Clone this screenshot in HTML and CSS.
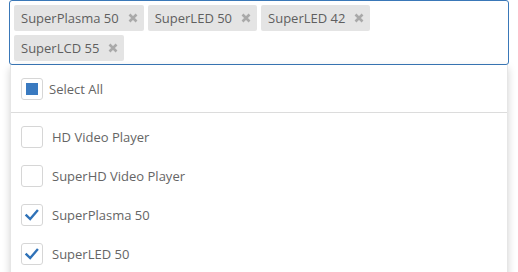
FILE: index.html
```html
<!DOCTYPE html>
<html>
<head>
<meta charset="utf-8">
<link rel="stylesheet" href="styles.css">
</head>
<body>
<div class="wrap">
  <div class="ms">
    <span class="tag">SuperPlasma 50<svg class="x" viewBox="0 0 10 10"><path d="M1.5 1.5L8.5 8.5M8.5 1.5L1.5 8.5"/></svg></span>
    <span class="tag">SuperLED 50<svg class="x" viewBox="0 0 10 10"><path d="M1.5 1.5L8.5 8.5M8.5 1.5L1.5 8.5"/></svg></span>
    <span class="tag">SuperLED 42<svg class="x" viewBox="0 0 10 10"><path d="M1.5 1.5L8.5 8.5M8.5 1.5L1.5 8.5"/></svg></span>
    <span class="tag">SuperLCD 55<svg class="x" viewBox="0 0 10 10"><path d="M1.5 1.5L8.5 8.5M8.5 1.5L1.5 8.5"/></svg></span>
  </div>
  <div class="popup">
    <div class="all">
      <span class="cb"><span class="ind"></span></span>
      <span class="lbl-all">Select All</span>
    </div>
    <ul class="list">
      <li class="item"><span class="cb"></span><span class="lbl">HD Video Player</span></li>
      <li class="item"><span class="cb"></span><span class="lbl">SuperHD Video Player</span></li>
      <li class="item"><span class="cb"><svg class="chk" viewBox="0 0 22 22"><path d="M4 10.5L9 15.5L17.5 5.5"/></svg></span><span class="lbl">SuperPlasma 50</span></li>
      <li class="item"><span class="cb"><svg class="chk" viewBox="0 0 22 22"><path d="M4 10.5L9 15.5L17.5 5.5"/></svg></span><span class="lbl">SuperLED 50</span></li>
    </ul>
  </div>
</div>
</body>
</html>
```
FILE: styles.css
```css
html, body { margin: 0; padding: 0; background: #fff; }
body { font-family: "Open Sans", "Noto Sans", sans-serif; font-size: 13px; color: #656565; }
.wrap { padding-left: 9px; width: 500px; }
.ms {
  box-sizing: border-box;
  width: 500px;
  height: 65px;
  border: 1px solid #3a78b8;
  border-radius: 3px;
  padding: 4px 34px 4px 4px;
  display: flex;
  flex-wrap: wrap;
  align-content: flex-start;
  gap: 4px;
}
.tag {
  height: 26px;
  box-sizing: border-box;
  display: flex;
  align-items: center;
  background: #e4e4e4;
  border-radius: 2px;
  padding: 0 6px 0 7px;
  color: #5f5f5f;
  white-space: nowrap;
}
.x { width: 10px; height: 10px; margin-left: 9px; }
.x path { stroke: #a9a9a9; stroke-width: 2.6; stroke-linecap: butt; fill: none; }
.popup {
  margin-left: 1px;
  width: 498px;
  height: 220px;
  background: #fff;
  border: 1px solid #e6e6e6;
  border-top: none;
  box-sizing: border-box;
  box-shadow: 0 3px 8px rgba(0,0,0,0.18);
  overflow: hidden;
}
.all {
  display: flex;
  align-items: center;
  padding-left: 10px;
  border-bottom: 1px solid #dcdcdc;
  box-sizing: border-box;
  height: 48px;
}
.cb {
  width: 22px; height: 22px;
  box-sizing: border-box;
  border: 1px solid #d6d6d6;
  border-radius: 3px;
  background: #fff;
  display: flex; align-items: center; justify-content: center;
  flex: none;
}
.ind { width: 12px; height: 12px; background: #3a7ac0; }
.lbl-all { margin-left: 6px; }
.list { list-style: none; margin: 0; padding: 4px 0 0 0; }
.item { height: 39px; display: flex; align-items: center; padding-left: 10px; }
.lbl { margin-left: 9px; }
.chk { width: 22px; height: 22px; }
.chk path { fill: none; stroke: #2f72b8; stroke-width: 2.6; }
```
